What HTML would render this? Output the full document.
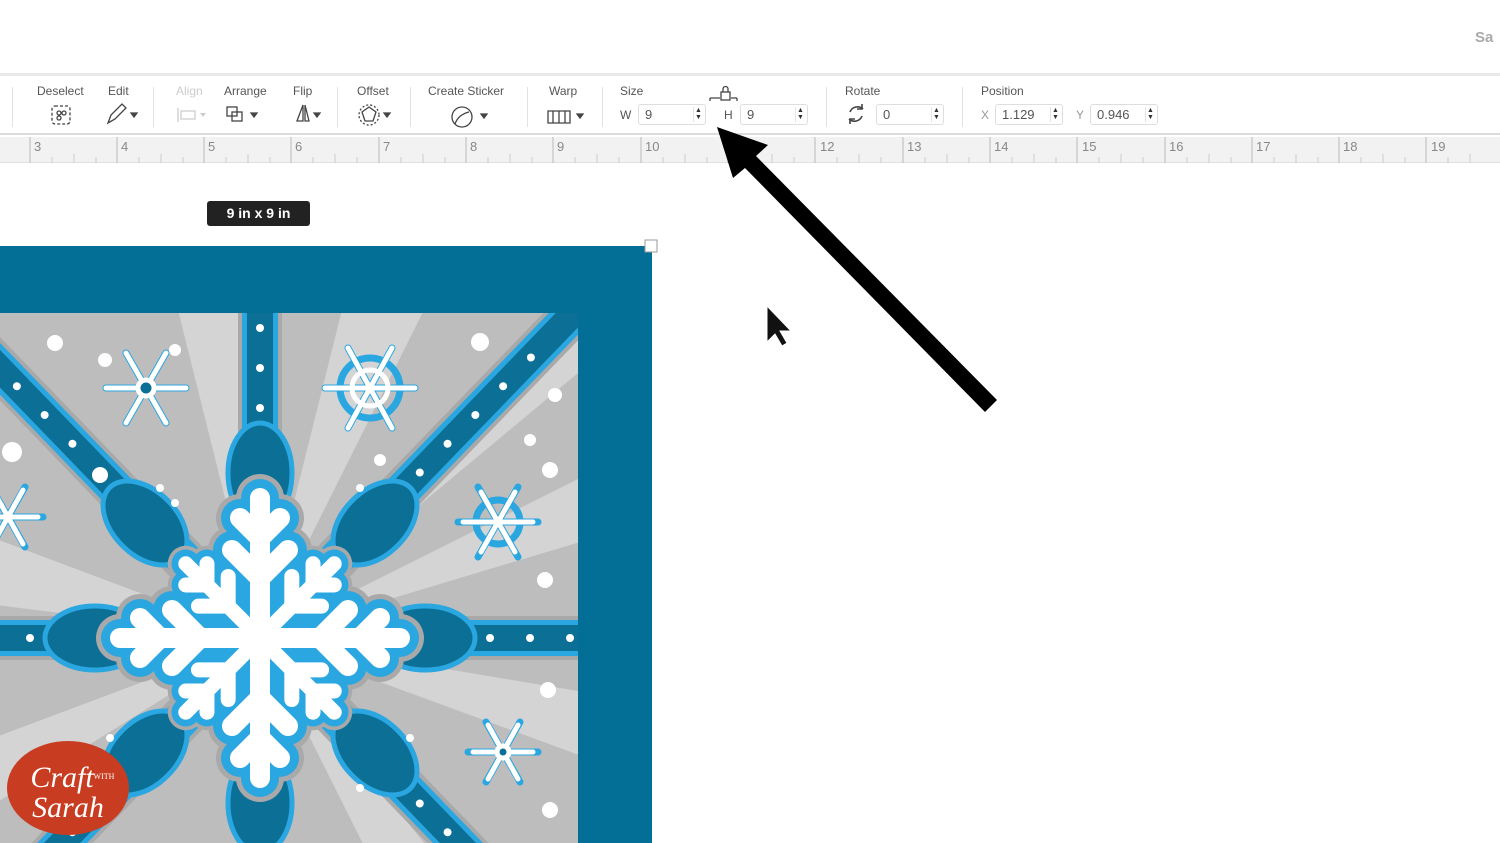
<!DOCTYPE html>
<html><head><meta charset="utf-8"><style>
*{margin:0;padding:0;box-sizing:border-box}
html,body{width:1500px;height:843px;overflow:hidden}
body{background:#fff;font-family:"Liberation Sans",sans-serif;position:relative}
.top{position:absolute;left:0;top:0;width:1500px;height:76px;background:#fff;border-bottom:3px solid #e9e9e9}
.tb{position:absolute;left:0;top:79px;width:1500px;height:56px;background:#fff;border-bottom:2px solid #dcdcdc}
.lbl{position:absolute;top:5px;font-size:12px;color:#555}
.sep{position:absolute;top:8px;width:1px;height:40px;background:#e2e2e2}
.inp{position:absolute;top:25px;height:21px;border:1px solid #dedede;border-radius:3px;font-size:13px;color:#555;padding:2px 0 0 6px}
.spin{position:absolute;right:2px;top:2px;width:10px;height:15px;border-left:1px solid #e4e4e4;font-size:7px;line-height:7px;text-align:center;color:#333}
.ruler{position:absolute;left:0;top:137px;width:1500px;height:26px;background:#f2f2f2;border-bottom:1px solid #e0e0e0}
.rn{position:absolute;top:2px;font-size:13px;color:#888}
</style></head><body>
<div class="top"><div style="position:absolute;left:1475px;top:29px;font-size:15px;color:#aaa;font-weight:bold">Sa</div></div>
<div class="tb">
<div class="sep" style="left:12px"></div>
<div class="lbl" style="left:37px">Deselect</div>
<div class="lbl" style="left:108px">Edit</div>
<div class="sep" style="left:153px"></div>
<div class="lbl" style="left:176px;color:#ccc">Align</div>
<div class="lbl" style="left:224px">Arrange</div>
<div class="lbl" style="left:293px">Flip</div>
<div class="sep" style="left:337px"></div>
<div class="lbl" style="left:357px">Offset</div>
<div class="sep" style="left:410px"></div>
<div class="lbl" style="left:428px">Create Sticker</div>
<div class="sep" style="left:527px"></div>
<div class="lbl" style="left:549px">Warp</div>
<div class="sep" style="left:602px"></div>
<div class="lbl" style="left:620px">Size</div>
<div class="lbl" style="left:620px;top:29px">W</div>
<div class="inp" style="left:638px;width:68px">9<div class="spin">▲<br>▼</div></div>
<div class="lbl" style="left:724px;top:29px">H</div>
<div class="inp" style="left:740px;width:68px">9<div class="spin">▲<br>▼</div></div>
<div class="sep" style="left:826px"></div>
<div class="lbl" style="left:845px">Rotate</div>
<div class="inp" style="left:876px;width:68px">0<div class="spin">▲<br>▼</div></div>
<div class="sep" style="left:962px"></div>
<div class="lbl" style="left:981px">Position</div>
<div class="lbl" style="left:981px;top:29px;color:#999">X</div>
<div class="inp" style="left:995px;width:68px">1.129<div class="spin">▲<br>▼</div></div>
<div class="lbl" style="left:1076px;top:29px;color:#999">Y</div>
<div class="inp" style="left:1090px;width:68px">0.946<div class="spin">▲<br>▼</div></div>
<svg style="position:absolute;left:0;top:0" width="1500" height="56" fill="none" stroke="#444" stroke-width="1.3">
<rect x="52" y="27" width="18" height="18" rx="3" stroke-dasharray="3 2"/><circle cx="59" cy="34" r="2"/><circle cx="64" cy="34" r="2"/><circle cx="59" cy="39" r="2"/>
<path d="M108 44l3-8 11-11 4 4-11 11z"/><path d="M131 34l3 4 3-4z" fill="#444"/>
<path d="M178 29v14M181 32h14v8h-14z" stroke="#ccc"/><path d="M200 34l3 4 3-4z" fill="#ccc" stroke="none"/>
<rect x="227" y="28" width="10" height="9"/><rect x="232" y="33" width="10" height="9"/><path d="M251 34l3 4 3-4z" fill="#444"/>
<path d="M297 42l6-16v16zM309 42l-4-16v16z"/><path d="M314 34l3 4 3-4z" fill="#444"/>
<path d="M369 28l7 5-3 9h-8l-3-9z"/><circle cx="369" cy="36" r="10" stroke-dasharray="2 2"/><path d="M384 34l3 4 3-4z" fill="#444"/>
<circle cx="462" cy="38" r="10"/><path d="M455 45c2-6 6-10 14-12"/><path d="M481 35l3 4 3-4z" fill="#444"/>
<path d="M548 32h22v12h-22zM553 32v12M559 32v12M565 32v12"/><path d="M577 35l3 4 3-4z" fill="#444"/>
<rect x="721" y="13" width="9" height="8"/><path d="M723 13v-3a2.5 2.5 0 015 0v3M710 19h10M731 19h6M710 19v3M737 19v3"/>
<path d="M863 30a8 8 0 00-13 3M849 40a8 8 0 0013-3M862 25v5h-5M850 45v-5h5" stroke-width="1.6"/>
</svg>
</div>
<div class="ruler">
<svg style="position:absolute;left:0;top:0" width="1500" height="26"><g stroke="#bbb" stroke-width="1">
<path d="M30 0v26M117 0v26M204 0v26M291 0v26M379 0v26M466 0v26M553 0v26M641 0v26M728 0v26M815 0v26M903 0v26M990 0v26M1077 0v26M1165 0v26M1252 0v26M1339 0v26M1426 0v26" />
</g><g stroke="#ccc"><path d="M52 20v6M74 17v9M96 20v6M139 20v6M161 17v9M183 20v6M226 20v6M248 17v9M270 20v6M313 20v6M335 17v9M357 20v6M401 20v6M423 17v9M445 20v6M488 20v6M510 17v9M532 20v6M575 20v6M597 17v9M619 20v6M663 20v6M685 17v9M707 20v6M750 20v6M772 17v9M794 20v6M837 20v6M859 17v9M881 20v6M925 20v6M947 17v9M969 20v6M1012 20v6M1034 17v9M1056 20v6M1099 20v6M1121 17v9M1143 20v6M1187 20v6M1209 17v9M1231 20v6M1274 20v6M1296 17v9M1318 20v6M1361 20v6M1383 17v9M1405 20v6M1448 20v6M1470 17v9"/></g></svg>
<div class="rn" style="left:34px">3</div><div class="rn" style="left:121px">4</div><div class="rn" style="left:208px">5</div><div class="rn" style="left:295px">6</div><div class="rn" style="left:383px">7</div><div class="rn" style="left:470px">8</div><div class="rn" style="left:557px">9</div><div class="rn" style="left:645px">10</div><div class="rn" style="left:732px">11</div><div class="rn" style="left:820px">12</div><div class="rn" style="left:907px">13</div><div class="rn" style="left:994px">14</div><div class="rn" style="left:1082px">15</div><div class="rn" style="left:1169px">16</div><div class="rn" style="left:1256px">17</div><div class="rn" style="left:1343px">18</div><div class="rn" style="left:1431px">19</div>
</div>
<div style="position:absolute;left:207px;top:201px;width:103px;height:25px;background:#222;border-radius:3px;color:#fff;font-size:14px;font-weight:bold;text-align:center;line-height:25px">9 in x 9 in</div>
<svg style="position:absolute;left:0;top:0" width="1500" height="843">
<defs><clipPath id="c"><rect x="0" y="313" width="578" height="530"/></clipPath>
<g id="band"><rect x="-20" y="-22" width="820" height="44" fill="#a9a9a9"/><rect x="-20" y="-18" width="820" height="36" fill="#2aa6e0"/><rect x="-20" y="-13" width="820" height="26" fill="#0b6f96"/>
<g fill="#fff"><circle cx="150" r="4"/><circle cx="190" r="4"/><circle cx="230" r="4"/><circle cx="270" r="4"/><circle cx="310" r="4"/><circle cx="350" r="4"/><circle cx="390" r="4"/><path d="M110-4l10 4-10 4-10-4z"/></g></g>
<g id="arms"><path d="M0 0V-140M0-60l-28-28M0-60l28-28M0-100l-20-20M0-100l20-20"/></g>
</defs>
<rect x="0" y="246" width="652" height="597" fill="#046f96"/>
<rect x="645" y="240" width="12" height="12" fill="#fff" stroke="#999"/>
<g clip-path="url(#c)">
<rect x="0" y="313" width="578" height="530" fill="#bdbdbd"/>
<g transform="translate(260,638)" fill="#d4d4d4">
<path d="M0 0L600-300L600-180zM0 0L600 100L600 220zM0 0L-100-400L0-400zM0 0L100-400L200-400zM0 0L-400-150L-400-50zM0 0L-400 150L-400 250zM0 0L200 400L320 400zM0 0L600-500L500-500z"/>
</g>
<g transform="translate(260,638)">
<use href="#band"/><use href="#band" transform="rotate(180)"/>
<use href="#band" transform="rotate(-90)"/><use href="#band" transform="rotate(90)"/>
<use href="#band" transform="rotate(-46)"/><use href="#band" transform="rotate(-134)"/>
<use href="#band" transform="rotate(46)"/><use href="#band" transform="rotate(134)"/>
<g fill="#0b6f96" stroke="#2aa6e0" stroke-width="5">
<ellipse cx="0" cy="-165" rx="32" ry="50"/><ellipse cx="0" cy="165" rx="32" ry="50"/><ellipse cx="165" cy="0" rx="50" ry="32"/><ellipse cx="-165" cy="0" rx="50" ry="32"/>
<ellipse cx="115" cy="-115" rx="32" ry="50" transform="rotate(45 115 -115)"/><ellipse cx="-115" cy="-115" rx="32" ry="50" transform="rotate(-45 -115 -115)"/><ellipse cx="115" cy="115" rx="32" ry="50" transform="rotate(-45 115 115)"/><ellipse cx="-115" cy="115" rx="32" ry="50" transform="rotate(45 -115 115)"/>
</g>
<g fill="#fff"><circle cx="-100" cy="-150" r="4"/><circle cx="-85" cy="-135" r="4"/><circle cx="100" cy="-150" r="4"/><circle cx="150" cy="100" r="4"/><circle cx="-150" cy="100" r="4"/><circle cx="100" cy="150" r="4"/></g>
<g fill="none" stroke-linecap="round" stroke-linejoin="round">
<g stroke="#a9a9a9" stroke-width="48"><use href="#arms"/><use href="#arms" transform="rotate(90)"/><use href="#arms" transform="rotate(180)"/><use href="#arms" transform="rotate(270)"/><use href="#arms" transform="rotate(45) scale(.75)"/><use href="#arms" transform="rotate(135) scale(.75)"/><use href="#arms" transform="rotate(225) scale(.75)"/><use href="#arms" transform="rotate(315) scale(.75)"/></g>
<g stroke="#2aa6e0" stroke-width="38"><use href="#arms"/><use href="#arms" transform="rotate(90)"/><use href="#arms" transform="rotate(180)"/><use href="#arms" transform="rotate(270)"/><use href="#arms" transform="rotate(45) scale(.75)"/><use href="#arms" transform="rotate(135) scale(.75)"/><use href="#arms" transform="rotate(225) scale(.75)"/><use href="#arms" transform="rotate(315) scale(.75)"/></g>
<g stroke="#fff" stroke-width="20"><use href="#arms"/><use href="#arms" transform="rotate(90)"/><use href="#arms" transform="rotate(180)"/><use href="#arms" transform="rotate(270)"/><use href="#arms" transform="rotate(45) scale(.75)"/><use href="#arms" transform="rotate(135) scale(.75)"/><use href="#arms" transform="rotate(225) scale(.75)"/><use href="#arms" transform="rotate(315) scale(.75)"/></g>
</g>
</g>
<g fill="#fff"><circle cx="55" cy="343" r="8"/><circle cx="105" cy="360" r="7"/><circle cx="175" cy="350" r="6"/><circle cx="480" cy="342" r="9"/><circle cx="555" cy="395" r="7"/><circle cx="530" cy="440" r="6"/><circle cx="550" cy="470" r="8"/><circle cx="12" cy="452" r="10"/><circle cx="100" cy="475" r="8"/><circle cx="380" cy="460" r="6"/><circle cx="545" cy="580" r="8"/><circle cx="548" cy="690" r="8"/><circle cx="550" cy="810" r="8"/></g>
<g fill="none" stroke="#2aa6e0" stroke-width="7" stroke-linecap="round"><g transform="translate(146,388)"><path d="M-40 0h80M-20-35l40 70M20-35l-40 70"/></g><g transform="translate(370,388)"><path d="M-45 0h90M-22-40l44 80M22-40l-44 80"/><circle r="30"/></g><g transform="translate(498,522)"><path d="M-40 0h80M-20-35l40 70M20-35l-40 70"/><circle r="22"/></g><g transform="translate(503,752)"><path d="M-35 0h70M-17-30l34 60M17-30l-34 60"/></g><g transform="translate(8,517)"><path d="M-35 0h70M-17-30l34 60M17-30l-34 60"/></g></g>
<g stroke="#fff" stroke-width="5" fill="none" stroke-linecap="round">
<g transform="translate(146,388)"><path d="M-40 0h80M-20-35l40 70M20-35l-40 70"/><circle r="8" fill="#0b6f96"/></g>
<g transform="translate(370,388)"><path d="M-45 0h90M-22-40l44 80M22-40l-44 80"/><circle r="18"/></g>
<g transform="translate(498,522)"><path d="M-35 0h70M-17-30l34 60M17-30l-34 60"/></g>
<g transform="translate(503,752)"><path d="M-30 0h60M-15-27l30 54M15-27l-30 54"/><circle r="6" fill="#0b6f96"/></g>
<g transform="translate(8,517)"><path d="M-30 0h60M-15-27l30 54M15-27l-30 54"/></g>
</g>
</g>
<ellipse cx="68" cy="788" rx="61" ry="47" fill="#c83c21"/>
<text x="62" y="787" text-anchor="middle" font-family="Liberation Serif,serif" font-style="italic" font-size="30" fill="#fff">Craft</text>
<text x="104" y="779" text-anchor="middle" font-family="Liberation Serif,serif" font-size="8" fill="#fff">WITH</text>
<text x="68" y="817" text-anchor="middle" font-family="Liberation Serif,serif" font-style="italic" font-size="30" fill="#fff">Sarah</text>
<path d="M717 127L768 145 756 156 997 400 985 412 745 168 733 178z" fill="#000"/>
<path d="M767 306v36l8-8 7 12 5-3-7-12h11z" fill="#111" stroke="#fff" stroke-width="1"/>
</svg>
</body></html>
